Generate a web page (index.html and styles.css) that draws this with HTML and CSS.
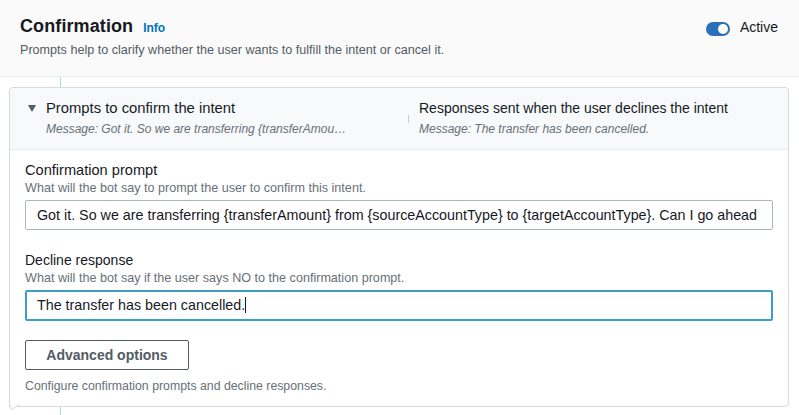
FILE: index.html
```html
<!DOCTYPE html>
<html>
<head>
<meta charset="utf-8">
<link rel="stylesheet" href="styles.css">
</head>
<body>
<header class="head">
  <div class="head-text">
    <div class="title-row">
      <h2 class="title">Confirmation</h2>
      <a class="info">Info</a>
    </div>
    <p class="desc">Prompts help to clarify whether the user wants to fulfill the intent or cancel it.</p>
  </div>
  <div class="status">
    <span class="toggle"><span class="knob"></span></span>
    <span class="status-label">Active</span>
  </div>
</header>
<div class="stem"></div>
<section class="card">
  <div class="card-head">
    <div class="col col-left">
      <span class="caret"></span>
      <div class="col-text">
        <div class="col-title wide">Prompts to confirm the intent</div>
        <div class="col-sub">Message: Got it. So we are transferring {transferAmou…</div>
      </div>
    </div>
    <div class="col col-right">
      <span class="divider"></span>
      <div class="col-text">
        <div class="col-title">Responses sent when the user declines the intent</div>
        <div class="col-sub">Message: The transfer has been cancelled.</div>
      </div>
    </div>
  </div>
  <div class="card-body">
    <div class="field">
      <div class="label">Confirmation prompt</div>
      <div class="hint">What will the bot say to prompt the user to confirm this intent.</div>
      <div class="input">Got it. So we are transferring {transferAmount} from {sourceAccountType} to {targetAccountType}. Can I go ahead</div>
    </div>
    <div class="field">
      <div class="label">Decline response</div>
      <div class="hint">What will the bot say if the user says NO to the confirmation prompt.</div>
      <div class="input focused">The transfer has been cancelled.<span class="cursor"></span></div>
    </div>
    <button class="btn">Advanced options</button>
    <div class="foot">Configure confirmation prompts and decline responses.</div>
  </div>
  <svg class="tail" width="14" height="8" viewBox="0 0 14 8"><path d="M0.5 0 L2.5 5.5 L11 0.5" fill="#fff" stroke="#d5dbdb" stroke-width="1"/></svg>
</section>
<div class="stem"></div>
</body>
</html>
```
FILE: styles.css
```css
* { box-sizing: border-box; }
html, body { margin: 0; padding: 0; background: #fff; }
body {
  font-family: "Liberation Sans", Arial, sans-serif;
  color: #16191f;
  font-size: 14px;
  overflow: hidden;
  height: 415px;
}
.head {
  background: #fafafa;
  border-bottom: 1px solid #eaeded;
  display: flex;
  justify-content: space-between;
  padding: 14px 20px 0 20px;
  height: 77px;
}
.title-row {
  display: flex;
  align-items: baseline;
  height: 24px;
}
.title {
  margin: 0;
  font-size: 18px;
  line-height: 24px;
  font-weight: 700;
  letter-spacing: 0.1px;
}
.info {
  margin-left: 10px;
  font-size: 12px;
  font-weight: 700;
  color: #0073bb;
}
.desc {
  margin: 4px 0 0 0;
  font-size: 12.6px;
  line-height: 16px;
  color: #545b64;
}
.status {
  display: flex;
  align-items: center;
  height: 20px;
  margin-top: 3px;
  margin-right: 1px;
}
.toggle {
  width: 24px;
  height: 14px;
  border-radius: 7px;
  background: #2a6fb8;
  display: flex;
  align-items: center;
  justify-content: flex-end;
  padding-right: 2px;
  margin-top: 4px;
}
.knob {
  width: 10px;
  height: 10px;
  border-radius: 50%;
  background: #fff;
}
.status-label {
  margin-left: 10px;
  font-size: 14px;
}
.stem {
  margin-left: 60px;
  width: 1px;
  height: 10px;
  background: #a9dae6;
}
.card {
  position: relative;
  margin: 0 10px 0 9px;
  border: 1px solid #d5dbdb;
  border-radius: 4px 4px 4px 0;
  background: #fff;
}
.card-head {
  display: grid;
  grid-template-columns: 1fr 1fr;
  padding: 10px 0 12px 18px;
  background: #f7f9fb;
  border-bottom: 1px solid #eaeded;
  border-radius: 4px 4px 0 0;
}
.col { display: flex; }
.caret {
  width: 0;
  height: 0;
  border-left: 4px solid transparent;
  border-right: 4px solid transparent;
  border-top: 7px solid #545b64;
  margin-top: 7px;
  margin-right: 10px;
}
.divider {
  width: 1px;
  height: 8px;
  background: #c6cccc;
  align-self: center;
  margin-top: 2px;
  margin-right: 10px;
}
.col-title {
  font-size: 14px;
  line-height: 20px;
}
.col-title.wide { font-size: 14.8px; }
.col-sub {
  font-size: 12px;
  line-height: 16px;
  font-style: italic;
  color: #687078;
  margin-top: 3px;
}
.card-body {
  padding: 10px 15px 12px 15px;
}
.field { margin-bottom: 20px; }
.label {
  font-size: 14px;
  line-height: 20px;
}
.field:first-child .label { font-size: 14.6px; }
.hint {
  font-size: 12.6px;
  line-height: 16px;
  color: #687078;
}
.input {
  margin-top: 4px;
  height: 30px;
  border: 1px solid #aab7b8;
  border-radius: 2px;
  padding: 0 11px;
  font-size: 14.3px;
  line-height: 28px;
  white-space: nowrap;
  overflow: hidden;
}
.input.focused {
  height: 31px;
  border: 2px solid #3c9fc9;
  padding: 0 10px;
  line-height: 27px;
}
.cursor {
  display: inline-block;
  width: 1px;
  height: 16px;
  background: #16191f;
  vertical-align: -3px;
}
.field:nth-of-type(2) { margin-bottom: 19px; }
.btn {
  display: block;
  height: 30px;
  width: 164px;
  border: 1px solid #545b64;
  border-radius: 2px;
  background: #fff;
  font-family: inherit;
  font-size: 14px;
  font-weight: 700;
  color: #545b64;
  padding: 0;
}
.foot {
  margin-top: 8px;
  font-size: 12.3px;
  line-height: 16px;
  color: #687078;
}
.tail {
  position: absolute;
  left: -1px;
  bottom: -6px;
}
```
